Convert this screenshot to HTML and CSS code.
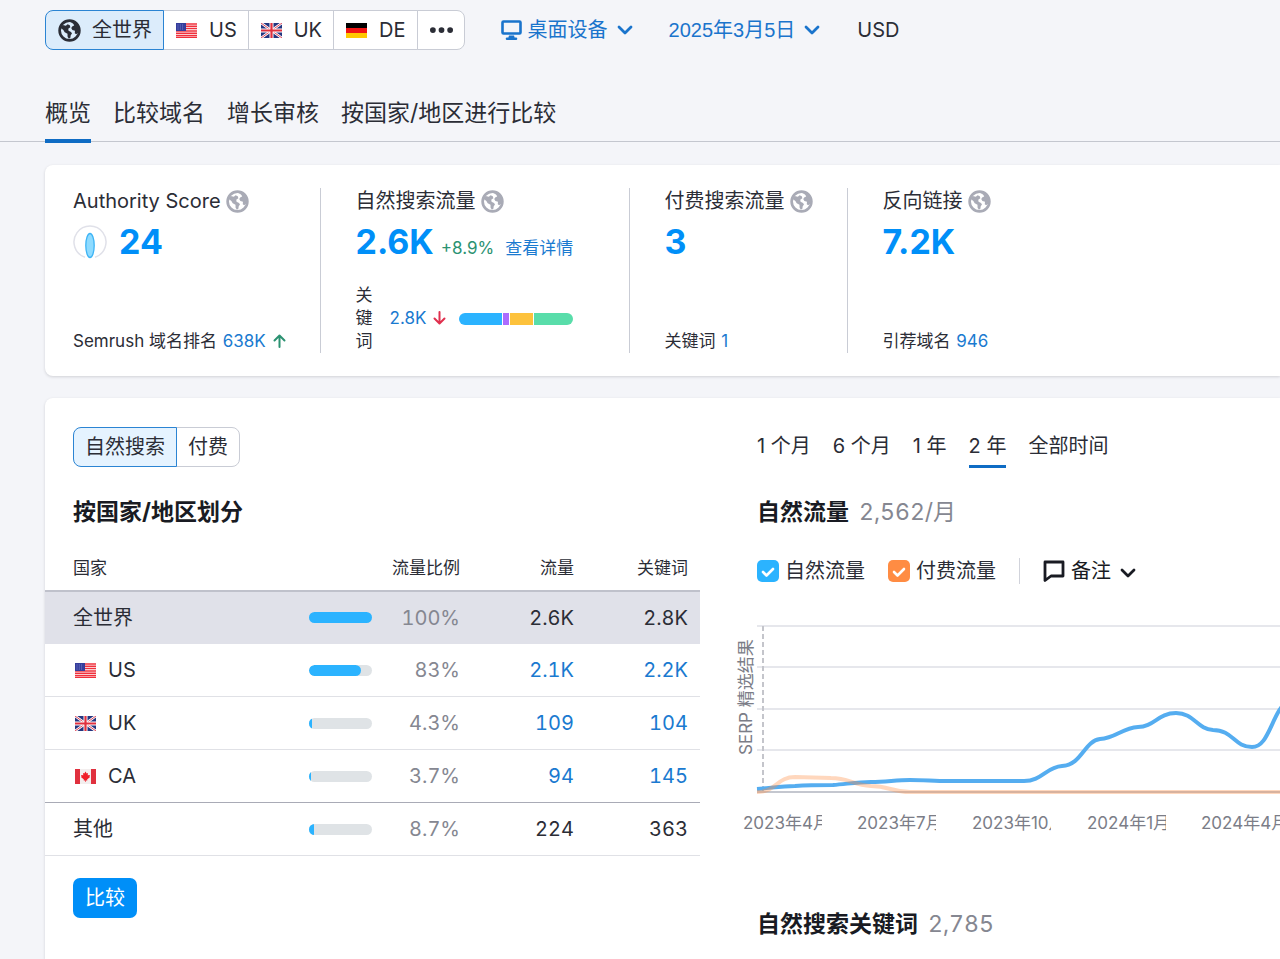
FILE: index.html
```html
<!DOCTYPE html>
<html lang="zh-CN">
<head>
<meta charset="utf-8">
<meta name="viewport" content="width=device-width, initial-scale=1">
<title>域名概览</title>
<link rel="stylesheet" href="styles.css">
</head>
<body>
<svg class="defs" aria-hidden="true">
  <symbol id="globe" viewBox="0 0 24 24">
    <circle cx="12" cy="12" r="10.300" fill="none" stroke="currentColor" stroke-width="2.800"/>
    <path fill="currentColor" d="M2.500 9 5 6.200l3.200.9 1.800-1.500 2.300.9.600 2-2.200 1.700.3 2 2.600 1.300 1 1.700-1.300 1.700-.4 2.700-1.500 1-1.400-2.200-.1-3-2.900-1.500-1.400-2.400zM13.500 3.200 18 3.500l3.500 4 .8 4.500-1.500 2.500-1.800 1.500-1.500-1.200.2-2.600-2.700-.7-1.200-2 1.300-2 1.800-.6-.8-1.700z"/>
  </symbol>
  <symbol id="chevron" viewBox="0 0 16 10">
    <path d="M2 2l6 6 6-6" fill="none" stroke="currentColor" stroke-width="2.800" stroke-linecap="round" stroke-linejoin="round"/>
  </symbol>
  <symbol id="flag-us" viewBox="0 0 21 15">
    <rect width="21" height="15" fill="#fff"/>
    <path d="M0 1h21M0 3.300h21M0 5.600h21M0 7.900h21M0 10.200h21M0 12.400h21M0 14.500h21" stroke="#f0303c" stroke-width="1.500"/>
    <rect width="10" height="8" fill="#343c9b"/>
    <path d="M1.500 2h7M1.500 4h7M1.500 6h7" stroke="#8f98dc" stroke-width=".8" stroke-dasharray="1 1.300"/>
  </symbol>
  <symbol id="flag-uk" viewBox="0 0 21 15">
    <rect width="21" height="15" fill="#24357f"/>
    <path d="M0 0l21 15M21 0L0 15" stroke="#fff" stroke-width="2.600"/>
    <path d="M0 0l21 15M21 0L0 15" stroke="#e0485a" stroke-width="1"/>
    <path d="M10.500 0v15M0 7.500h21" stroke="#fff" stroke-width="4"/>
    <path d="M10.500 0v15M0 7.500h21" stroke="#e0303e" stroke-width="2.200"/>
  </symbol>
  <symbol id="flag-de" viewBox="0 0 21 15">
    <rect width="21" height="5" fill="#000"/>
    <rect y="5" width="21" height="5" fill="#f01414"/>
    <rect y="10" width="21" height="5" fill="#ffc800"/>
  </symbol>
  <symbol id="flag-ca" viewBox="0 0 21 15">
    <rect width="21" height="15" fill="#f3eeee"/>
    <path d="M0 0h5v15H0zM16 0h5v15h-5z" fill="#e0303e"/>
    <path d="M10.500 2.500l1.200 2 1.300-.5-.3 2.300 2.300-.4-.6 1.600.7.6-3 2.300.2 1h-1.500V13h-.6v-1.600H8.700l.2-1-3-2.300.7-.6L6 5.900l2.300.4L8 4l1.300.5z" fill="#f01e28"/>
  </symbol>
</svg>

<header class="toolbar">
  <div class="segments" role="group" aria-label="数据库">
    <button class="segment segment-active" type="button"><svg class="globe"><use href="#globe"/></svg>全世界</button>
    <button class="segment" type="button"><svg class="flag"><use href="#flag-us"/></svg>US</button>
    <button class="segment" type="button"><svg class="flag"><use href="#flag-uk"/></svg>UK</button>
    <button class="segment" type="button"><svg class="flag"><use href="#flag-de"/></svg>DE</button>
    <button class="segment" type="button" aria-label="更多"><svg class="dots" viewBox="0 0 24 8"><g fill="currentColor"><circle cx="3" cy="4" r="3"/><circle cx="12" cy="4" r="3"/><circle cx="21" cy="4" r="3"/></g></svg></button>
  </div>
  <button class="trigger" type="button" aria-haspopup="listbox"><svg class="icon-desktop" viewBox="0 0 21 21"><rect x="1.500" y="1.500" width="18" height="12" rx="1" fill="none" stroke="currentColor" stroke-width="2.600"/><path d="M8 15.500h5l.6 2H15a1.300 1.300 0 0 1 0 2.600H6a1.300 1.300 0 0 1 0-2.600h1.400z" fill="currentColor"/></svg>桌面设备<svg class="chevron"><use href="#chevron"/></svg></button>
  <button class="trigger trigger-date" type="button" aria-haspopup="dialog">2025年3月5日<svg class="chevron"><use href="#chevron"/></svg></button>
  <span>USD</span>
</header>

<nav class="tabs" aria-label="报告">
  <a class="tab tab-active" href="#overview">概览</a>
  <a class="tab" href="#compare">比较域名</a>
  <a class="tab" href="#growth">增长审核</a>
  <a class="tab" href="#countries">按国家/地区进行比较</a>
</nav>

<main class="content" id="overview">
  <section class="card metrics">
    <div class="metric">
      <h3 class="metric-title">Authority Score <svg class="globe"><use href="#globe"/></svg></h3>
      <div class="metric-value">
        <svg class="score" viewBox="0 0 34 34"><path d="M12 32.200a16 16 0 1 1 10 0" fill="none" stroke="#e0e1e9" stroke-width="1.500"/><ellipse cx="17" cy="20.500" rx="4.200" ry="12" fill="#8edbff" stroke="#3eb4f5" stroke-width="1.300"/></svg>
        <a class="number" href="#score">24</a>
      </div>
      <p class="metric-foot">Semrush 域名排名 <a href="#rank">638K</a> <svg class="arrow arrow-up" viewBox="0 0 13 14"><path d="M6.500 13V2M1.500 6.500l5-5 5 5"/></svg></p>
    </div>
    <div class="metric metric-wide">
      <h3 class="metric-title">自然搜索流量 <svg class="globe"><use href="#globe"/></svg></h3>
      <div class="metric-value metric-value-baseline">
        <a class="number" href="#organic">2.6K</a>
        <span class="change">+8.9%</span>
        <a class="details" href="#details">查看详情</a>
      </div>
      <div class="keywords">
        <span class="keywords-label">关键词</span>
        <span class="keywords-count"><a href="#keywords">2.8K</a> <svg class="arrow arrow-down" viewBox="0 0 13 14"><path d="M6.500 1v11M1.500 7.500l5 5 5-5"/></svg></span>
        <span class="intents"><i class="intent-info"></i><i class="intent-nav"></i><i class="intent-com"></i><i class="intent-trans"></i></span>
      </div>
    </div>
    <div class="metric">
      <h3 class="metric-title">付费搜索流量 <svg class="globe"><use href="#globe"/></svg></h3>
      <div class="metric-value"><a class="number" href="#paid">3</a></div>
      <p class="metric-foot">关键词 <a href="#paid-keywords">1</a></p>
    </div>
    <div class="metric">
      <h3 class="metric-title">反向链接 <svg class="globe"><use href="#globe"/></svg></h3>
      <div class="metric-value"><a class="number" href="#backlinks">7.2K</a></div>
      <p class="metric-foot">引荐域名 <a href="#domains">946</a></p>
    </div>
  </section>

  <section class="card report">
    <div class="countries">
      <div class="segments inset" role="group" aria-label="流量类型">
        <button class="segment segment-active" type="button">自然搜索</button>
        <button class="segment" type="button">付费</button>
      </div>
      <h2 class="heading inset">按国家/地区划分</h2>
      <table class="table">
        <thead>
          <tr><th class="col-name" scope="col">国家</th><th class="col-share" scope="col">流量比例</th><th class="col-num" scope="col">流量</th><th class="col-last" scope="col">关键词</th></tr>
        </thead>
        <tbody>
          <tr class="row-total"><td>全世界</td><td><div class="share"><span class="bar"><span class="bar-fill" style="width:100%"></span></span>100%</div></td><td>2.6K</td><td>2.8K</td></tr>
          <tr><td><span class="country"><svg class="flag"><use href="#flag-us"/></svg>US</span></td><td><div class="share"><span class="bar"><span class="bar-fill bar-fill-round" style="width:83%"></span></span>83%</div></td><td><a href="#us">2.1K</a></td><td><a href="#us-kw">2.2K</a></td></tr>
          <tr><td><span class="country"><svg class="flag"><use href="#flag-uk"/></svg>UK</span></td><td><div class="share"><span class="bar"><span class="bar-fill" style="width:4.3%"></span></span>4.3%</div></td><td><a href="#uk">109</a></td><td><a href="#uk-kw">104</a></td></tr>
          <tr class="row-divider"><td><span class="country"><svg class="flag"><use href="#flag-ca"/></svg>CA</span></td><td><div class="share"><span class="bar"><span class="bar-fill" style="width:3.7%"></span></span>3.7%</div></td><td><a href="#ca">94</a></td><td><a href="#ca-kw">145</a></td></tr>
          <tr><td>其他</td><td><div class="share"><span class="bar"><span class="bar-fill" style="width:8.7%"></span></span>8.7%</div></td><td>224</td><td>363</td></tr>
        </tbody>
      </table>
      <button class="button-primary inset" type="button">比较</button>
    </div>

    <div class="trends">
      <div class="periods">
        <button class="period" type="button">1 个月</button>
        <button class="period" type="button">6 个月</button>
        <button class="period" type="button">1 年</button>
        <button class="period period-active" type="button">2 年</button>
        <button class="period" type="button">全部时间</button>
      </div>
      <h2 class="heading trend-heading">自然流量 <span class="total">2,562/月</span></h2>
      <div class="legend">
        <label class="check"><input class="box box-organic" type="checkbox" checked>自然流量</label>
        <label class="check"><input class="box box-paid" type="checkbox" checked>付费流量</label>
        <button class="notes" type="button" aria-haspopup="menu"><svg class="icon-note" viewBox="0 0 22 22"><path d="M2 2h18v14H8l-6 4.500z" fill="none" stroke="currentColor" stroke-width="2.800" stroke-linejoin="round"/></svg>备注<svg class="chevron"><use href="#chevron"/></svg></button>
      </div>
      <svg class="chart" role="img" aria-label="自然流量趋势">
        <g class="grid"><line x1="24" x2="100%" y1="26" y2="26"/><line x1="24" x2="100%" y1="67" y2="67"/><line x1="24" x2="100%" y1="109" y2="109"/><line x1="24" x2="100%" y1="150" y2="150"/></g>
        <line class="axis" x1="24" x2="100%" y1="192" y2="192"/>
        <line class="marker" x1="30" x2="30" y1="26" y2="192"/>
        <path class="line-organic" d="M24 189C38 188 48 186 62 186C76 185 86 185 100 185C114 184 124 182 138 182C153 182 163 180 177 180C191 180 201 181 215 181H291C309 181 313 167 329 166C349 165 351 141 367 139C383 138 389 128 405 127C421 127 425 113 443 113C461 113 464 129 480 130C500 130 501 147 519 147C537 147 538 112 557 98"/>
        <path class="line-paid" d="M24 192C43 192 44 177 62 177L98 178C116 178 120 185 138 186C156 186 159 192 177 192H547"/>
        <text class="axis-label" transform="translate(19 155) rotate(-90)">SERP 精选结果</text>
        <g class="axis-label">
          <svg x="10" y="210" width="79" height="26"><text y="19">2023年4月</text></svg>
          <svg x="124" y="210" width="79" height="26"><text y="19">2023年7月</text></svg>
          <svg x="239" y="210" width="79" height="26"><text y="19">2023年10月</text></svg>
          <svg x="354" y="210" width="79" height="26"><text y="19">2024年1月</text></svg>
          <svg x="468" y="210" width="79" height="26"><text y="19">2024年4月</text></svg>
        </g>
      </svg>
      <h2 class="heading trend-heading">自然搜索关键词 <span class="total">2,785</span></h2>
    </div>
  </section>
</main>
</body>
</html>
```

FILE: styles.css
```css
* {
  box-sizing: border-box;
}

body {
  margin: 0;
  min-height: 100vh;
  display: flex;
  flex-direction: column;
  overflow-x: hidden;
  background: #f4f5f9;
  color: #2b2d36;
  font-family: Inter, "Noto Sans CJK SC", sans-serif;
  font-size: 20px;
  line-height: 26px;
}

h2, h3, p {
  margin: 0;
}

button {
  padding: 0;
  border: 0;
  background: none;
  color: inherit;
  font: inherit;
  cursor: pointer;
}

a {
  color: #1a7ad0;
  text-decoration: none;
}

svg {
  flex: none;
}

.defs {
  position: absolute;
  width: 0;
  height: 0;
}

.globe {
  width: 23px;
  height: 23px;
}

.flag {
  width: 21px;
  height: 15px;
}

.chevron {
  width: 16px;
  height: 10px;
}

/* Toolbar */
.toolbar {
  display: flex;
  align-items: center;
  padding: 10px 45px 0;
  white-space: nowrap;
}

.segments {
  display: flex;
}

.segment {
  display: flex;
  align-items: center;
  gap: 12px;
  height: 40px;
  padding: 0 11px 0 12px;
  border: 1px solid #c9ccd5;
  background: #fff;
}

.segment + .segment {
  margin-left: -1px;
}

.segment:first-child {
  gap: 11px;
  border-radius: 8px 0 0 8px;
}

.segment:last-child {
  border-radius: 0 8px 8px 0;
}

.segment-active {
  z-index: 1;
  border-color: #2b84d3;
  background: #dcecfb;
}

.countries .segment {
  padding: 0 11px;
}

.countries .segment-active {
  background: #e5f3ff;
}

.dots {
  width: 23px;
  height: 8px;
}

.trigger {
  display: flex;
  align-items: center;
  gap: 6px;
  margin-left: 36px;
  color: #1a74cc;
}

.trigger .chevron {
  margin-left: 3px;
}

.trigger-date {
  margin-right: 37px;
  font-family: "Liberation Sans", "Noto Sans CJK SC", sans-serif;
}

.icon-desktop {
  width: 21px;
  height: 21px;
}

/* Report tabs */
.tabs {
  display: flex;
  gap: 22px;
  margin-top: 35px;
  padding: 0 45px;
  border-bottom: 1px solid #c4c7cf;
  white-space: nowrap;
}

.tab {
  padding: 13px 0 11px;
  margin-bottom: -2px;
  border-bottom: 4px solid transparent;
  color: inherit;
  font-size: 23px;
  line-height: 30px;
}

.tab-active {
  border-color: #0f6cc4;
}

/* Cards */
.content {
  flex: 1;
  display: flex;
  flex-direction: column;
  gap: 22px;
  padding: 23px 0 0 45px;
}

.card {
  border-radius: 8px 0 0 8px;
  background: #fff;
  box-shadow: 0 1px 3px rgba(25, 27, 35, 0.16);
}

.metrics {
  display: flex;
  padding: 23px 28px;
  white-space: nowrap;
}

.metric {
  display: flex;
  flex-direction: column;
  min-height: 165px;
  padding-right: 34px;
}

.metric + .metric {
  padding-left: 35px;
  border-left: 1px solid #c9ccd5;
}

.metric-wide {
  flex: 0 0 309px;
}

.metric-title {
  display: flex;
  align-items: center;
  gap: 5px;
  font-size: 20px;
  font-weight: 400;
}

.metric-title .globe {
  color: #a9abb6;
}

.metric-value {
  display: flex;
  align-items: center;
  gap: 12px;
  margin-top: 6px;
}

.metric-value-baseline {
  align-items: baseline;
  gap: 7px;
}

.number {
  color: #008ff8;
  font-size: 34px;
  font-weight: 700;
  line-height: 44px;
}

.score {
  width: 34px;
  height: 34px;
}

.change {
  color: #2c9272;
  font-size: 17px;
}

.details {
  margin-left: 4px;
  font-size: 17px;
}

.metric-foot,
.keywords {
  margin-top: auto;
  font-size: 17px;
  line-height: 23px;
}

.metric-foot a {
  margin-left: 1px;
}

.arrow {
  width: 13px;
  height: 14px;
  margin-left: 2px;
  vertical-align: -1px;
  fill: none;
  stroke-width: 2;
  stroke-linecap: round;
  stroke-linejoin: round;
}

.arrow-up {
  stroke: #2c9272;
}

.arrow-down {
  stroke: #e0304e;
}

.keywords {
  display: flex;
  align-items: center;
}

.keywords-label {
  width: 17px;
  white-space: normal;
}

.keywords-count {
  margin: 0 13px 0 17px;
}

.intents {
  display: flex;
  gap: 1px;
  height: 12px;
  border-radius: 6px;
  overflow: hidden;
}

.intent-info {
  width: 43px;
  background: #2bb3ff;
}

.intent-nav {
  width: 6px;
  background: #ab6cfe;
}

.intent-com {
  width: 23px;
  background: #fdc23c;
}

.intent-trans {
  width: 39px;
  background: #59ddaa;
}

/* Country breakdown */
.report {
  flex: 1;
  display: flex;
  padding-top: 29px;
  border-radius: 8px 0 0 0;
}

.countries {
  flex: 0 0 655px;
}

.inset {
  margin-left: 28px;
}

.heading {
  color: #191b23;
  font-size: 23px;
  font-weight: 700;
  line-height: 30px;
}

.countries .heading {
  margin-top: 30px;
}

.table {
  width: 100%;
  margin-top: 19px;
  border-collapse: separate;
  border-spacing: 0;
  table-layout: fixed;
  font-variant-numeric: tabular-nums;
  text-align: right;
}

.table th {
  height: 46px;
  padding: 0;
  border-bottom: 2px solid #bfc1cb;
  font-size: 17px;
  font-weight: 400;
  line-height: 24px;
}

.table td {
  height: 53px;
  padding: 0;
  border-bottom: 1px solid #e0e1e6;
}

.table th:first-child,
.table td:first-child {
  padding-left: 28px;
  text-align: left;
}

.table th:last-child,
.table td:last-child {
  padding-right: 12px;
}

.table .row-total td {
  height: 52px;
  border-color: #e0e1e9;
  background: #e0e1e9;
}

.table .row-divider td {
  border-color: #a9abb6;
}

.col-share {
  width: 151px;
}

.col-num {
  width: 114px;
}

.col-last {
  width: 126px;
}

.country {
  display: flex;
  align-items: center;
  gap: 12px;
  padding-left: 2px;
}

.share {
  display: flex;
  align-items: center;
  justify-content: space-between;
  color: #858791;
}

.bar {
  width: 63px;
  height: 11px;
  border-radius: 6px;
  background: #dfe3e6;
  overflow: hidden;
}

.bar-fill {
  display: block;
  height: 100%;
  background: #2bb3ff;
}

.bar-fill-round {
  border-radius: 6px;
}

.button-primary {
  height: 40px;
  margin-top: 22px;
  padding: 0 12px;
  border-radius: 7px;
  background: #008ff8;
  color: #fff;
}

/* Trends */
.trends {
  flex: 1;
  min-width: 0;
  padding-left: 33px;
  white-space: nowrap;
}

.periods {
  display: flex;
  gap: 22px;
  padding-left: 24px;
}

.period {
  padding: 6px 0;
  border-bottom: 3px solid transparent;
}

.period-active {
  border-color: #0f6cc4;
}

.trend-heading {
  display: flex;
  gap: 10px;
  padding-left: 24px;
}

.periods + .trend-heading {
  margin-top: 29px;
}

.total {
  color: #858791;
  font-weight: 400;
  font-variant-numeric: tabular-nums;
}

.legend {
  display: flex;
  align-items: center;
  gap: 23px;
  margin-top: 31px;
  padding-left: 24px;
}

.check {
  display: flex;
  align-items: center;
  gap: 6px;
}

.box {
  appearance: none;
  width: 22px;
  height: 22px;
  margin: 0;
  border-radius: 5px;
  background-color: #2bb3ff;
}

.box-paid {
  background-color: #ff8c43;
}

.box:checked {
  background-image: url("data:image/svg+xml,%3Csvg xmlns='http://www.w3.org/2000/svg' viewBox='0 0 22 22'%3E%3Cpath d='M6 12l3.500 3.500L16 9' fill='none' stroke='white' stroke-width='2.600' stroke-linecap='round' stroke-linejoin='round'/%3E%3C/svg%3E");
}

.notes {
  display: flex;
  align-items: center;
  gap: 6px;
  padding-left: 23px;
  border-left: 1px solid #d1d3db;
  color: #191b23;
}

.notes .chevron {
  margin: 4px 0 0 3px;
}

.icon-note {
  width: 22px;
  height: 22px;
}

.chart {
  display: block;
  width: 100%;
  height: 250px;
  margin: 16px 0 59px;
}

.grid line {
  stroke: #e6e7ec;
  stroke-width: 2;
}

.axis {
  stroke: #c4c7cf;
  stroke-width: 2;
}

.marker {
  stroke: #c4c5cb;
  stroke-width: 2;
  stroke-dasharray: 5 3;
}

.line-organic,
.line-paid {
  fill: none;
  stroke-width: 4;
}

.line-organic {
  stroke: #55adf0;
}

.line-paid {
  stroke: #ff8c43;
  stroke-opacity: 0.35;
}

.axis-label {
  fill: #7b7d87;
  font-size: 17px;
}
```
